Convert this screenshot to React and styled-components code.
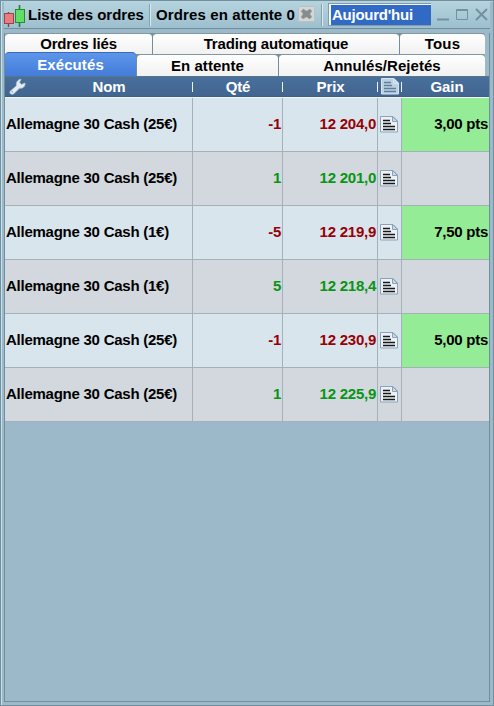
import React from "react";
import styled, { createGlobalStyle } from "styled-components";

const orders = [
  { id: 1, name: "Allemagne 30 Cash (25€)", qty: -1, price: "12 204,0", gain: "3,00 pts" },
  { id: 2, name: "Allemagne 30 Cash (25€)", qty: 1, price: "12 201,0" },
  { id: 3, name: "Allemagne 30 Cash (1€)", qty: -5, price: "12 219,9", gain: "7,50 pts" },
  { id: 4, name: "Allemagne 30 Cash (1€)", qty: 5, price: "12 218,4" },
  { id: 5, name: "Allemagne 30 Cash (25€)", qty: -1, price: "12 230,9", gain: "5,00 pts" },
  { id: 6, name: "Allemagne 30 Cash (25€)", qty: 1, price: "12 225,9" },
];

const CandlesIcon = () => (
  <svg width="21" height="23" viewBox="0 0 21 23">
    <path d="M4.5 7v15" stroke="#963b44" strokeWidth="1.4" />
    <rect x="0.5" y="8.5" width="9" height="10" fill="#e97c80" stroke="#9c444b" />
    <path d="M15.5 0v22" stroke="#228137" strokeWidth="1.6" />
    <rect x="11.5" y="4.5" width="9" height="13" fill="#62dd66" stroke="#248b37" />
  </svg>
);

const CancelIcon = () => (
  <svg width="17" height="17" viewBox="0 0 17 17">
    <rect x="0.5" y="0.5" width="16" height="15" rx="1" fill="#d5d7d6" stroke="#bbc0c1" />
    <path
      d="M3 5l2.5-2L8.5 5 12 3l2 2-2.1 3L14 11l-2.5 2-3-2-3.5 2-2-2 2.1-3z"
      fill="#858c90"
      stroke="#a6abad"
      strokeWidth="0.6"
    />
  </svg>
);

const WrenchIcon = () => (
  <svg width="17" height="17" viewBox="0 0 17 17">
    <path
      d="M1.2 13.2L7.5 7.8C6.8 4.6 8.5 1.5 12 1.2L10.5 4.4l2 2.1 3.6-1.4c.2 3.2-2.2 5.6-5.6 5.1l-6 5.7c-2.2 1.2-4.6-.8-3.3-2.7z"
      fill="#e6edf2"
      stroke="#b5c6d5"
      strokeWidth="0.8"
    />
    <circle cx="3.2" cy="13.8" r="0.8" fill="#7c96b0" />
  </svg>
);

const NoteIcon = ({ header }) => (
  <svg width="18" height="17" viewBox="0 0 18 17">
    <path
      d="M0.5 0.5h12.5l4.5 4.5v11h-17z"
      fill={header ? "#bdd0e0" : "#edf1f3"}
      stroke={header ? "#d8e4ed" : "#89a3bd"}
    />
    <path
      d="M12.5 0.5v5h5z"
      fill="#c9dbe9"
      stroke={header ? "#d8e4ed" : "#89a3bd"}
    />
    <path
      d="M3 4.5h7M3 7.5h8M3 10.5h12M3 13.5h12"
      stroke={header ? "#5f7f9f" : "#16191c"}
      strokeWidth="1.6"
    />
  </svg>
);

const WindowIcons = () => (
  <svg width="51" height="14" viewBox="0 0 51 14">
    <path d="M0 11.5h12" stroke="#73919f" strokeWidth="2" />
    <path d="M19.5 1.5h11v10h-11zM19 2.5h12" fill="none" stroke="#73919f" />
    <path d="M39 1l11 11M50 1L39 12" stroke="#73919f" strokeWidth="2" />
  </svg>
);

export default function App() {
  return (
    <>
      <GlobalStyle />
      <Window>
        <TitleBar>
          <Title>
            <CandlesIcon />
            <TitleText>Liste des ordres</TitleText>
          </Title>
          <Pending>
            <span>Ordres en attente 0</span>
            <CancelIcon />
          </Pending>
          <Period>
            <PeriodValue>Aujourd'hui</PeriodValue>
          </Period>
          <WindowButtons>
            <WindowIcons />
          </WindowButtons>
        </TitleBar>
        <Panel>
          <TabRow $columns="147px 246px 85px">
            <Tab>Ordres liés</Tab>
            <Tab>Trading automatique</Tab>
            <Tab $spacing="0.15px">Tous</Tab>
          </TabRow>
          <TabRow $columns="131px 141px 206px">
            <Tab $active $spacing="0.1px">Exécutés</Tab>
            <Tab $spacing="0.05px">En attente</Tab>
            <Tab $spacing="0.05px">Annulés/Rejetés</Tab>
          </TabRow>
          <Header>
            <HeadCell>
              <Wrench>
                <WrenchIcon />
              </Wrench>
              <NameLabel>Nom</NameLabel>
            </HeadCell>
            <HeadCell>Qté</HeadCell>
            <HeadCell>Prix</HeadCell>
            <HeadCell>
              <NoteIcon header />
            </HeadCell>
            <HeadCell>Gain</HeadCell>
          </Header>
          <Body>
            {orders.map((order, index) => (
              <Row key={order.id} $odd={index % 2 === 1}>
                <Cell>{order.name}</Cell>
                <NumberCell $negative={order.qty < 0}>{order.qty}</NumberCell>
                <NumberCell $negative={order.qty < 0}>{order.price}</NumberCell>
                <NoteCell>
                  <NoteIcon />
                </NoteCell>
                <GainCell $filled={!!order.gain}>{order.gain}</GainCell>
              </Row>
            ))}
          </Body>
        </Panel>
      </Window>
    </>
  );
}

const GlobalStyle = createGlobalStyle`
  * {
    box-sizing: border-box;
  }
  body {
    margin: 0;
    font-family: "Liberation Sans", Arial, sans-serif;
    font-size: 15px;
    font-weight: bold;
    line-height: 17px;
    color: #000;
  }
  svg {
    display: block;
    flex: none;
  }
`;

const Window = styled.div`
  width: 494px;
  height: 706px;
  display: flex;
  flex-direction: column;
  padding: 0 3px 3px;
  background: #9bb9c9;
  border: 1px solid #718f9d;
  box-shadow: inset 1px 0 #c7e2ed, inset 0 1px #b3d0da;
`;

const TitleBar = styled.div`
  height: 28px;
  flex: none;
  display: flex;
  align-items: center;
  background: linear-gradient(#b5d4df, #9dbfce);
  border-bottom: 1px solid #6f8f9f;
  white-space: nowrap;
`;

const Title = styled.div`
  width: 147px;
  height: 22px;
  display: flex;
  align-items: center;
  border-right: 1px solid #dcebf0;
  box-shadow: inset -1px 0 #829faa;

  svg {
    margin-top: 3px;
  }
`;

const TitleText = styled.span`
  margin-left: 3px;
`;

const Pending = styled.div`
  width: 172px;
  height: 22px;
  display: flex;
  align-items: center;
  gap: 3px;
  padding-left: 5px;
  letter-spacing: 0.12px;
  border-right: 1px solid #dcebf0;
  box-shadow: inset -1px 0 #829faa;
`;

const Period = styled.div`
  width: 103px;
  height: 23px;
  margin-left: 5px;
  padding: 1px 0 0 2px;
  border: 1px solid #839ba6;
  border-right: 0;
  background: #f2f5f5;
`;

const PeriodValue = styled.div`
  height: 20px;
  padding: 1px 1px;
  color: #fff;
  background: #316ac5;
  letter-spacing: -0.25px;
`;

const WindowButtons = styled.div`
  margin: 0 2px 0 auto;
`;

const Panel = styled.div`
  flex: 1;
  margin-top: 4px;
  display: flex;
  flex-direction: column;
  border: 1px solid #718f9d;
  border-top: 0;
  width: 486px;
`;

const TabRow = styled.div`
  height: 21px;
  display: grid;
  grid-template-columns: ${(props) => props.$columns};
  column-gap: 1px;
  width: 480px;
  background: #738e9a;
  border-radius: 3px 3px 0 0;

  & + & {
    height: 22px;
  }
`;

const Tab = styled.div`
  display: flex;
  align-items: center;
  justify-content: center;
  margin-top: ${(props) => (props.$active ? "-2px" : "0")};
  padding-bottom: 1px;
  border-top: 1px solid ${(props) => (props.$active ? "#386bb8" : "#8298a1")};
  border-radius: 4px 4px 0 0;
  color: ${(props) => (props.$active ? "#fff" : "#000")};
  letter-spacing: ${(props) => props.$spacing || "-0.15px"};
  background: ${(props) =>
    props.$active ? "linear-gradient(#5c95e9, #447dd9)" : "linear-gradient(#fff, #f1f1f1)"};
`;

const grid = "188px 90px 95px 24px 87px";

const Header = styled.div`
  height: 21px;
  flex: none;
  display: grid;
  grid-template-columns: ${grid};
  color: #fff;
  background: linear-gradient(#486f9c, #426590);
  border-top: 1px solid #58758a;
  border-bottom: 1px solid #3b6082;
  letter-spacing: -0.1px;
`;

const HeadCell = styled.div`
  height: 19px;
  display: flex;
  align-items: center;
  justify-content: center;
  background: linear-gradient(#eef3f7, #eef3f7) right 5px / 1px 10px no-repeat;

  &:last-child {
    background: none;
    padding-left: 3px;
  }
`;

const Wrench = styled.span`
  width: 22px;
  padding-left: 4px;
`;

const NameLabel = styled.span`
  flex: 1;
  padding-right: 2px;
  text-align: center;
`;

const Body = styled.div`
  border-top: 1px solid #f0f6f9;
`;

const Row = styled.div`
  height: 54px;
  display: grid;
  grid-template-columns: ${grid};
  background: ${(props) => (props.$odd ? "#d2d8dd" : "#d8e5ed")};
  letter-spacing: -0.25px;
`;

const Cell = styled.div`
  display: flex;
  align-items: center;
  padding: 0 0 2px 1px;
  border-right: 1px solid #a5b1b8;
  border-bottom: 1px solid #a5b1b8;
`;

const NumberCell = styled(Cell)`
  justify-content: flex-end;
  padding-right: 1px;
  color: ${(props) => (props.$negative ? "#980005" : "#079513")};
`;

const NoteCell = styled(Cell)`
  justify-content: center;
  padding: 0 1px 1px 0;
`;

const GainCell = styled(Cell)`
  justify-content: flex-end;
  padding-right: 1px;
  border-right: 0;
  background: ${(props) => (props.$filled ? "#95ec96" : "transparent")};
`;
